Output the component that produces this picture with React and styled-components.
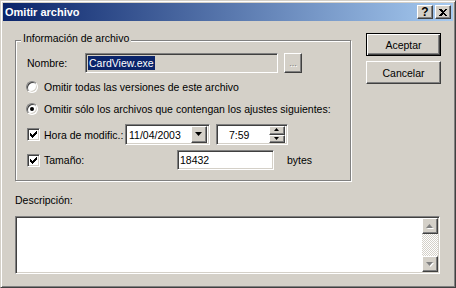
import React from 'react';
import styled, { createGlobalStyle, css } from 'styled-components';

const GlobalStyle = createGlobalStyle`
  html, body {
    margin: 0;
    padding: 0;
    background: #D4D0C8;
  }
  body {
    font-family: "Liberation Sans", Arial, sans-serif;
    font-size: 10.5px;
    color: #000;
  }
`;

const raised = css`
  background: #D4D0C8;
  border: 1px solid;
  border-color: #fff #404040 #404040 #fff;
  box-shadow: inset -1px -1px 0 #808080;
`;

const sunken = css`
  border: 1px solid;
  border-color: #808080 #fff #fff #808080;
  box-shadow: inset 1px 1px 0 #404040, inset -1px -1px 0 #D4D0C8;
`;

const Window = styled.div`
  width: 456px;
  height: 288px;
  box-sizing: border-box;
  background: #D4D0C8;
  border: 1px solid;
  border-color: #D4D0C8 #404040 #404040 #D4D0C8;
  box-shadow: inset 1px 1px 0 #fff, inset -1px -1px 0 #808080;
  padding: 2px;
`;

const TitleBar = styled.div`
  height: 18px;
  display: flex;
  align-items: center;
  justify-content: space-between;
  padding: 0 2px;
  background: linear-gradient(to right, #0A246A, #A6CAF0);
`;

const TitleText = styled.span`
  color: #fff;
  font-weight: bold;
  font-size: 11px;
`;

const TitleButtons = styled.div`
  display: flex;
  gap: 2px;
`;

const TitleButton = styled.div`
  ${raised};
  width: 16px;
  height: 14px;
  box-sizing: border-box;
  display: flex;
  align-items: center;
  justify-content: center;
  font-weight: bold;
  font-size: 12px;
  line-height: 12px;
`;

const Body = styled.div`
  padding: 12px 0 0 12px;
`;

const TopRow = styled.div`
  display: flex;
  align-items: flex-start;
`;

const GroupBox = styled.div`
  position: relative;
  margin-top: 7px;
  width: 336px;
  height: 141px;
  box-sizing: border-box;
  border: 1px solid #808080;
  box-shadow: 1px 1px 0 #fff, inset 1px 1px 0 #fff;
  padding: 12px 0 0 11px;
`;

const Legend = styled.span`
  position: absolute;
  top: -9px;
  left: 5px;
  padding: 0 2px;
  line-height: 13px;
  background: #D4D0C8;
`;

const Row = styled.div`
  display: flex;
  align-items: center;
  height: ${p => p.$h}px;
  margin-top: ${p => p.$top || 0}px;
`;

const Label = styled.span`
  width: ${p => (p.$w ? `${p.$w}px` : 'auto')};
  margin-left: ${p => p.$ml || 0}px;
  flex: none;
  white-space: nowrap;
`;

const Field = styled.div`
  ${sunken};
  box-sizing: border-box;
  width: ${p => p.$w}px;
  height: ${p => p.$h}px;
  background: ${p => (p.$readOnly ? '#D4D0C8' : '#fff')};
  display: flex;
  align-items: center;
  padding: 0 2px 0 ${p => p.$pad ?? 2}px;
  margin-left: ${p => p.$ml || 0}px;
  flex: none;
`;

const Selected = styled.span`
  background: #0A246A;
  color: #fff;
  line-height: 14px;
  padding: 0 1px;
`;

const FieldText = styled.span`
  flex: 1;
  white-space: nowrap;
`;

const DotsButton = styled.div`
  ${raised};
  box-sizing: border-box;
  width: 18px;
  height: 20px;
  margin-left: 6px;
  display: flex;
  align-items: flex-end;
  justify-content: center;
  padding-bottom: 4px;
  color: #808080;
  text-shadow: 1px 1px 0 #fff;
  font-size: 9px;
  line-height: 9px;
`;

const RadioCircle = styled.span`
  position: relative;
  flex: none;
  width: 12px;
  height: 12px;
  box-sizing: border-box;
  border-radius: 50%;
  margin-left: -1px;
  margin-right: 6px;
  background: #fff;
  border: 1px solid;
  border-color: #808080 #fff #fff #808080;
  box-shadow: inset 1px 1px 0 #404040, inset -1px -1px 0 #D4D0C8;
  ${p =>
    p.$checked &&
    css`
      &::after {
        content: '';
        position: absolute;
        left: 3px;
        top: 3px;
        width: 4px;
        height: 4px;
        border-radius: 50%;
        background: #000;
      }
    `}
`;

const CheckBox = styled.span`
  ${sunken};
  flex: none;
  width: 13px;
  height: 13px;
  box-sizing: border-box;
  background: #fff;
  margin-right: 4px;
  display: flex;
  align-items: center;
  justify-content: center;
`;

const DropButton = styled.div`
  ${raised};
  box-sizing: border-box;
  width: 16px;
  height: 17px;
  flex: none;
  display: flex;
  align-items: center;
  justify-content: center;
`;

const Spinner = styled.div`
  display: flex;
  flex-direction: column;
  flex: none;
  width: 16px;
  height: 17px;
`;

const SpinButton = styled.div`
  ${raised};
  box-sizing: border-box;
  flex: 1;
  display: flex;
  align-items: center;
  justify-content: center;
`;

const ButtonColumn = styled.div`
  display: flex;
  flex-direction: column;
  gap: 5px;
  margin-left: 15px;
`;

const PushButton = styled.div`
  box-sizing: border-box;
  width: 75px;
  height: 23px;
  display: flex;
  align-items: center;
  justify-content: center;
  background: #D4D0C8;
  border: 1px solid;
  ${p =>
    p.$default
      ? css`
          border-color: #000;
          box-shadow: inset 1px 1px 0 #fff, inset -1px -1px 0 #404040, inset -2px -2px 0 #808080;
        `
      : css`
          border-color: #fff #404040 #404040 #fff;
          box-shadow: inset -1px -1px 0 #808080;
        `}
`;

const DescLabel = styled.div`
  margin-top: 13px;
  line-height: 13px;
`;

const TextArea = styled.div`
  ${sunken};
  box-sizing: border-box;
  width: 425px;
  height: 58px;
  margin-top: 9px;
  background: #fff;
  padding: 1px;
  display: flex;
  justify-content: flex-end;
`;

const ScrollBar = styled.div`
  width: 16px;
  display: flex;
  flex-direction: column;
`;

const ScrollArrow = styled.div`
  ${raised};
  box-sizing: border-box;
  width: 16px;
  height: 16px;
  display: flex;
  align-items: center;
  justify-content: center;
`;

const ScrollTrack = styled.div`
  flex: 1;
  background: repeating-conic-gradient(#fff 0 25%, #D4D0C8 0 50%) 0 0 / 2px 2px;
`;

const Check = () => (
  <svg width="7" height="7" viewBox="0 0 7 7" shapeRendering="crispEdges">
    <path d="M6 0h1v3h-1v1h-1v1h-1v1h-1v1h-1v-1h-1v-1h-1v-3h1v1h1v1h1v-1h1v-1h1z" fill="#000" />
  </svg>
);

const Tri = ({ up, w = 7, color = '#000', shadow }) => {
  const h = Math.ceil(w / 2);
  const pts = up ? `0,${h} ${w},${h} ${w / 2},0` : `0,0 ${w},0 ${w / 2},${h}`;
  return (
    <svg width={w + 1} height={h + 1} viewBox={`0 0 ${w + 1} ${h + 1}`}>
      {shadow && <polygon points={pts} fill="#fff" transform="translate(1 1)" />}
      <polygon points={pts} fill={color} />
    </svg>
  );
};

const CloseGlyph = () => (
  <svg width="8" height="7" viewBox="0 0 8 7" shapeRendering="crispEdges">
    <path d="M0 0h2l2 2 2-2h2L5 3.5 8 7H6L4 5 2 7H0l3-3.5z" fill="#000" />
  </svg>
);

export default function App() {
  return (
    <>
      <GlobalStyle />
      <Window>
        <TitleBar>
          <TitleText>Omitir archivo</TitleText>
          <TitleButtons>
            <TitleButton>?</TitleButton>
            <TitleButton>
              <CloseGlyph />
            </TitleButton>
          </TitleButtons>
        </TitleBar>
        <Body>
          <TopRow>
            <GroupBox>
              <Legend>Información de archivo</Legend>
              <Row $h={20}>
                <Label $w={58}>Nombre:</Label>
                <Field $w={193} $h={20} $readOnly>
                  <Selected>CardView.exe</Selected>
                </Field>
                <DotsButton>...</DotsButton>
              </Row>
              <Row $h={16} $top={6}>
                <RadioCircle />
                <Label>Omitir todas las versiones de este archivo</Label>
              </Row>
              <Row $h={16} $top={6}>
                <RadioCircle $checked />
                <Label>Omitir sólo los archivos que contengan los ajustes siguientes:</Label>
              </Row>
              <Row $h={21} $top={7}>
                <CheckBox>
                  <Check />
                </CheckBox>
                <Label $w={81}>Hora de modific.:</Label>
                <Field $w={85} $h={21} $pad={3}>
                  <FieldText>11/04/2003</FieldText>
                  <DropButton>
                    <Tri w={7} />
                  </DropButton>
                </Field>
                <Field $w={72} $h={21} $pad={12} $ml={6}>
                  <FieldText>7:59</FieldText>
                  <Spinner>
                    <SpinButton>
                      <Tri up w={5} />
                    </SpinButton>
                    <SpinButton>
                      <Tri w={5} />
                    </SpinButton>
                  </Spinner>
                </Field>
              </Row>
              <Row $h={20} $top={5}>
                <CheckBox>
                  <Check />
                </CheckBox>
                <Label $w={133}>Tamaño:</Label>
                <Field $w={97} $h={20}>
                  <FieldText>18432</FieldText>
                </Field>
                <Label $ml={13}>bytes</Label>
              </Row>
            </GroupBox>
            <ButtonColumn>
              <PushButton $default>Aceptar</PushButton>
              <PushButton>Cancelar</PushButton>
            </ButtonColumn>
          </TopRow>
          <DescLabel>Descripción:</DescLabel>
          <TextArea>
            <ScrollBar>
              <ScrollArrow>
                <Tri up w={7} color="#808080" shadow />
              </ScrollArrow>
              <ScrollTrack />
              <ScrollArrow>
                <Tri w={7} color="#808080" shadow />
              </ScrollArrow>
            </ScrollBar>
          </TextArea>
        </Body>
      </Window>
    </>
  );
}
